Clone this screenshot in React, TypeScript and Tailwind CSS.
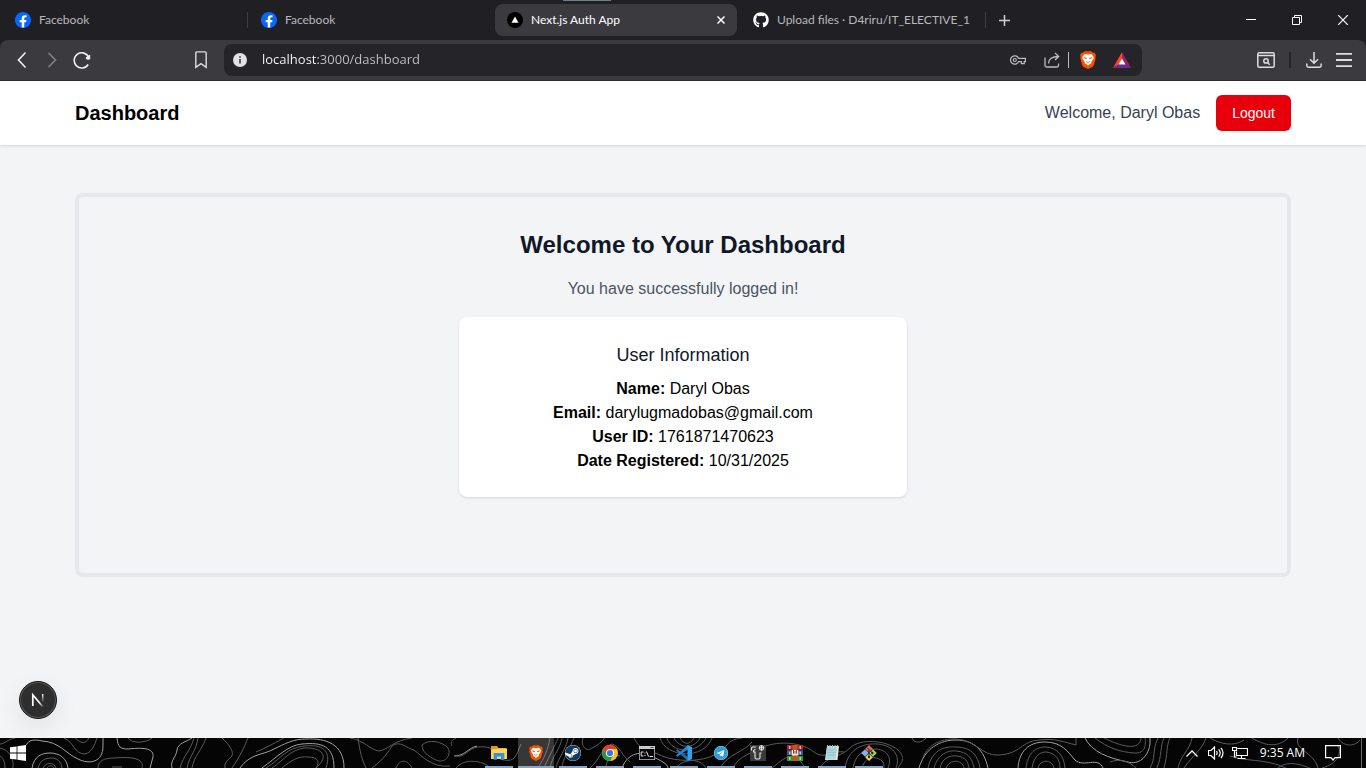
import React from "react";
import { FaGithub, FaSteam, FaTelegram } from "react-icons/fa";

function FacebookIcon() {
  return (
    <svg viewBox="0 0 24 24" className="size-4 shrink-0" aria-hidden="true">
      <circle cx="12" cy="12.5" r="11" fill="#fff" />
      <path
        fill="#0866ff"
        d="M24 12.073c0-6.627-5.373-12-12-12s-12 5.373-12 12c0 5.99 4.388 10.954 10.125 11.854v-8.385H7.078v-3.47h3.047V9.43c0-3.007 1.792-4.669 4.533-4.669 1.312 0 2.686.235 2.686.235v2.953H15.83c-1.491 0-1.956.925-1.956 1.874v2.25h3.328l-.532 3.47h-2.796v8.385C19.612 23.027 24 18.062 24 12.073z"
      />
    </svg>
  );
}

function NextIcon() {
  return (
    <svg viewBox="0 0 16 16" className="size-4 shrink-0" aria-hidden="true">
      <circle cx="8" cy="8" r="8" fill="#000" />
      <path d="M8 4.500 11.500 10.700H4.500Z" fill="#fff" />
    </svg>
  );
}

function BraveIcon({ className }: { className: string }) {
  return (
    <svg viewBox="0 0 16 18" className={className} aria-hidden="true">
      <path
        d="M4.600.2h6.800l1.500 1.600 1.700-.1 1.400 2.500-.6 1.500.4 1.200-2 7.200c-.2.7-.7 1.200-1.200 1.600L8.600 17.800c-.4.3-.8.3-1.200 0l-4-2.100c-.5-.4-1-.9-1.200-1.600L.2 6.900l.4-1.200L0 4.200 1.400 1.700 3.100 1.800Z"
        fill="#fb5000"
      />
      <path
        d="M4.600 3 8 3.500 11.400 3l2.200 2.700-.4 2.500-1.900 2.500.2 1.200L8 14.600l-3.500-2.700.2-1.200-1.900-2.500-.4-2.500Z"
        fill="#fff"
      />
      <path
        d="M3.800 5.900 6.900 7 6.300 8.100 4.400 7.600ZM12.200 5.900 9.100 7 9.700 8.100 11.600 7.600ZM6 9.900 8 11.200l2-1.300-.3 1L8 12.100l-1.700-1.200Z"
        fill="#fb5000"
      />
    </svg>
  );
}

function BatIcon() {
  return (
    <svg viewBox="0 0 18 16" className="h-4 w-[18px]" aria-hidden="true">
      <path d="M9 0 0 16l6-3.500L9 7Z" fill="#ff4724" />
      <path d="M9 0v7l3.300 5.500L18 16Z" fill="#9e1f63" />
      <path d="M0 16h18l-5.500-3.700h-7Z" fill="#662d91" />
      <path d="M9 6.500 5.500 12.500h7Z" fill="#fff" />
    </svg>
  );
}

const tabs = [
  { title: "Facebook", icon: <FacebookIcon />, active: false, divider: true },
  { title: "Facebook", icon: <FacebookIcon />, active: false, divider: false },
  { title: "Next.js Auth App", icon: <NextIcon />, active: true, divider: false },
  {
    title: "Upload files · D4riru/IT_ELECTIVE_1",
    icon: <FaGithub className="size-4 shrink-0 text-white" />,
    active: false,
    divider: true,
  },
];

function TabStrip() {
  return (
    <div className="relative flex h-10 items-center bg-[#201f24] pl-[3px]">
      <div className="absolute top-0 left-[563px] h-px w-12 bg-[#6b7d92]" />
      {tabs.map((tab, i) => (
        <React.Fragment key={i}>
          <div
            className={
              tab.active
                ? "flex h-8 w-[242px] min-w-0 items-center gap-2 rounded-lg bg-[#3b3a3f] pr-2 pl-3 text-white"
                : "flex h-8 w-[242px] min-w-0 items-center gap-2 rounded-lg pr-2 pl-3 text-[#b9b8bd]"
            }
          >
            {tab.icon}
            <span className="flex-1 truncate font-[Lato,sans-serif] text-xs">{tab.title}</span>
            {tab.active && (
              <button aria-label="Close tab" className="flex size-4 items-center justify-center">
                <svg viewBox="0 0 8 8" className="size-2" fill="none" stroke="#fff" strokeWidth="1.500">
                  <path d="M.5.5l7 7M7.500.5l-7 7" />
                </svg>
              </button>
            )}
          </div>
          <div className="flex h-4 w-1 shrink-0 justify-center">
            {tab.divider && <span className="w-px bg-[#3e3d43]" />}
          </div>
        </React.Fragment>
      ))}
      <button aria-label="New tab" className="flex h-8 w-[34px] items-center justify-center">
        <svg viewBox="0 0 11 11" className="size-[11px]" stroke="#cfced3" strokeWidth="1.500">
          <path d="M5.500 0v11M0 5.500h11" />
        </svg>
      </button>
      <div className="ml-auto flex h-10 shrink-0">
        <button aria-label="Minimize" className="flex w-[46px] items-center justify-center">
          <svg viewBox="0 0 10 10" className="size-2.5" stroke="#fff">
            <path d="M0 4.500h10" />
          </svg>
        </button>
        <button aria-label="Restore" className="flex w-[46px] items-center justify-center">
          <svg viewBox="0 0 10 10" className="size-2.5" fill="none" stroke="#fff">
            <path d="M.5 2.500h7v7h-7zM2.500 2.500v-2h7v7h-2" />
          </svg>
        </button>
        <button aria-label="Close" className="flex w-[46px] items-center justify-center">
          <svg viewBox="0 0 10 10" className="size-2.5" stroke="#fff" strokeWidth="1.200">
            <path d="M0 0l10 10M10 0 0 10" />
          </svg>
        </button>
      </div>
    </div>
  );
}

function BarButton({ label, children }: { label: string; children: React.ReactNode }) {
  return (
    <button aria-label={label} className="flex h-8 w-[30px] shrink-0 items-center justify-center">
      {children}
    </button>
  );
}

function Toolbar() {
  return (
    <div className="bg-[#201f24]">
      <div className="flex h-[41px] items-center rounded-t-lg border-b border-[#2c2b30] bg-[#3b3a3f] px-[7px]">
        <BarButton label="Back">
          <svg viewBox="0 0 18 18" className="size-[18px]" fill="none" stroke="#f0f0f2" strokeWidth="1.600">
            <path d="M12.500 1.500 5.500 9l7 7.500" />
          </svg>
        </BarButton>
        <BarButton label="Forward">
          <svg viewBox="0 0 18 18" className="size-[18px]" fill="none" stroke="#828187" strokeWidth="1.600">
            <path d="M5.500 2 12.500 9l-7 7" />
          </svg>
        </BarButton>
        <BarButton label="Reload">
          <svg viewBox="0 0 18 18" className="size-[18px]" fill="none" stroke="#f0f0f2" strokeWidth="1.600">
            <path d="M15.200 13.500A7.600 7.600 0 1 1 15.800 6.500" />
            <path d="M17.200 3.500v4.500q-1 1-2.500.8-2-.5-2-2.300 1-1 4.500-3Z" fill="#f0f0f2" stroke="none" />
          </svg>
        </BarButton>
        <div className="w-[89px] shrink-0" />
        <BarButton label="Bookmark">
          <svg viewBox="0 0 12 18" className="h-[18px] w-3" fill="none" stroke="#dddce1" strokeWidth="1.400">
            <path d="M.8 1.900Q.8.900 1.800.9h8.400q1 0 1 1v14.400L6 12.700.8 16.300Z" />
          </svg>
        </BarButton>
        <div className="ml-2 flex h-8 min-w-0 flex-1 items-center rounded-lg bg-[#252429] pr-[5px] pl-[9px]">
          <svg viewBox="0 0 14 14" className="size-3.5 shrink-0" aria-hidden="true">
            <circle cx="7" cy="7" r="7" fill="#e2e1e6" />
            <path d="M6.200 6h1.600v4.500H6.200zM6.200 3.200h1.600v1.600H6.200z" fill="#3b3a3f" />
          </svg>
          <input
            aria-label="Address"
            defaultValue="localhost:3000/dashboard"
            className="ml-[15px] min-w-0 flex-1 bg-[linear-gradient(90deg,#ffffff_56px,#c4c3c8_56px)] bg-clip-text text-[13px] text-transparent caret-white outline-none"
          />
          <BarButton label="Passwords">
            <svg viewBox="0 0 16 10" className="h-2.5 w-4" fill="none" stroke="#bcbbc0" strokeWidth="1.200">
              <path d="M8.600 3.400H15.400V6.600H14.200V8.600H11.400V6.600H8.600A4.200 4.200 0 1 1 8.600 3.400Z" />
              <circle cx="4.800" cy="5" r="1.500" />
            </svg>
          </BarButton>
          <div className="ml-1">
            <BarButton label="Share">
              <svg viewBox="0 0 16 16" className="size-4" fill="none" stroke="#bcbbc0" strokeWidth="1.300">
                <path d="M1 5.500v8q0 1.500 1.500 1.500h10.500q1.500 0 1.500-1.500v-2M4.500 11.500C4.500 7 8 4.500 14.500 4.500M11 1l3.700 3.500L11 8" />
              </svg>
            </BarButton>
          </div>
          <div className="mr-1 ml-px h-4 w-px bg-[#bcbbc0]" />
          <BarButton label="Brave Shields">
            <BraveIcon className="h-[18px] w-4" />
          </BarButton>
          <div className="ml-1">
            <BarButton label="Brave Rewards">
              <BatIcon />
            </BarButton>
          </div>
        </div>
        <div className="w-[109px] shrink-0" />
        <BarButton label="Search tabs">
          <svg viewBox="0 0 18 16" className="h-4 w-[18px]" fill="none" stroke="#dddce1" strokeWidth="1.500">
            <rect x=".8" y=".8" width="16.400" height="14.400" rx="1.500" />
            <path d="M1 3.400h16M10.700 10.700l2 2" />
            <circle cx="9" cy="8.900" r="2.200" />
          </svg>
        </BarButton>
        <div className="mx-2 h-4 w-0.5 bg-[#252429]" />
        <BarButton label="Downloads">
          <svg viewBox="0 0 16 16" className="size-4" fill="none" stroke="#dddce1" strokeWidth="1.500">
            <path d="M8 0v11M4 7.200l4 4 4-4M.8 11.500v2q0 1.700 1.700 1.700h11q1.700 0 1.700-1.700v-2" />
          </svg>
        </BarButton>
        <BarButton label="Menu">
          <svg viewBox="0 0 16 14" className="h-3.5 w-4" stroke="#dddce1" strokeWidth="1.800">
            <path d="M0 .9h16M0 7h16M0 13.100h16" />
          </svg>
        </BarButton>
      </div>
    </div>
  );
}

const details = [
  ["Name:", "Daryl Obas"],
  ["Email:", "darylugmadobas@gmail.com"],
  ["User ID:", "1761871470623"],
  ["Date Registered:", "10/31/2025"],
];

function DashboardPage() {
  return (
    <div className="relative flex-1 bg-gray-100 font-['Liberation_Sans',Arial,sans-serif] text-black">
      <nav className="bg-white shadow">
        <div className="mx-auto flex h-16 max-w-7xl items-center justify-between px-8">
          <h1 className="text-xl font-bold">Dashboard</h1>
          <div className="flex items-center gap-4">
            <span className="text-gray-700">Welcome, Daryl Obas</span>
            <button className="rounded-md bg-[#e7000b] px-4 py-2 text-sm font-medium text-white">Logout</button>
          </div>
        </div>
      </nav>
      <main className="mx-auto max-w-7xl px-8 py-12">
        <div className="min-h-96 rounded-lg border-4 border-gray-200 p-8 text-center">
          <h2 className="mb-4 text-2xl font-bold text-gray-900">Welcome to Your Dashboard</h2>
          <p className="mb-4 text-gray-600">You have successfully logged in!</p>
          <div className="mx-auto max-w-md rounded-lg bg-white p-6 shadow">
            <h3 className="mb-2 text-lg font-medium text-gray-900">User Information</h3>
            {details.map(([label, value]) => (
              <p key={label}>
                <strong>{label}</strong> {value}
              </p>
            ))}
          </div>
        </div>
      </main>
      <button
        aria-label="Open Next.js Dev Tools"
        className="absolute bottom-[19px] left-[19px] flex size-[38px] items-center justify-center rounded-full border border-[#171717] bg-[#2e2e2e] shadow-[inset_0_0_0_1px_#5a5a5a,0_8px_24px_rgba(0,0,0,0.08)]"
      >
        <svg viewBox="0 0 14 14" className="size-3.5" fill="none" strokeWidth="1.700">
          <defs>
            <linearGradient id="next-diagonal" x1="6" y1="6" x2="12" y2="14" gradientUnits="userSpaceOnUse">
              <stop offset=".4" stopColor="#fff" />
              <stop offset="1" stopColor="#fff" stopOpacity=".1" />
            </linearGradient>
            <linearGradient id="next-stem" x1="0" y1="1" x2="0" y2="9" gradientUnits="userSpaceOnUse">
              <stop stopColor="#fff" />
              <stop offset="1" stopColor="#fff" stopOpacity=".1" />
            </linearGradient>
          </defs>
          <path d="M1.800 13V1.800L12 14" stroke="url(#next-diagonal)" />
          <path d="M11 1h1.400v8H11z" fill="url(#next-stem)" />
        </svg>
      </button>
    </div>
  );
}

const brightContours = [
  "M26 7C29 2 34 1 42 3C60 4 66 16 78 21C90 27 103 24 103 8V0",
  "M117 0C118 9 120 11 128 11C146 9 154 11 153 19L150 30",
  "M32 30C34 18 42 15 50 15C60 15 67 21 68 30",
  "M172 30C170 22 176 20 177 12C178 5 186 4 192 0",
  "M240 30C250 16 262 17 272 12C286 5 294 1 306 1C326 0 344 6 344 30",
  "M262 30C276 20 288 7 302 6C322 4 334 8 334 30",
  "M454 18C465 18 468 10 477 8",
  "M622 30C628 14 642 13 651 18C660 22 668 26 668 30",
  "M919 30C925 10 940 2 956 2C974 2 984 12 988 30",
  "M1018 30C1019 14 1028 4 1045 4C1062 4 1068 14 1075 22C1084 30 1098 18 1103 30",
  "M1085 0C1092 14 1108 20 1128 24C1138 27 1148 20 1150 6V0",
];

const dimContours = [
  "M0 6C5 6 8 1 15 0M0 10C8 12 14 18 13 30M0 18C4 20 5 26 5 30",
  "M64 0C74 4 74 16 85 16C92 14 94 8 97 0M75 0C80 4 84 8 89 0",
  "M38 30C40 22 46 20 51 20C57 20 61 23 62 30M43 30C46 24 54 24 56 30M47 30C49 27 52 27 54 30",
  "M128 0C132 6 146 5 152 0M98 30C98 23 104 20 114 20C136 18 144 22 142 30M112 29H122",
  "M180 30C184 16 190 14 194 0M187 30C190 16 196 14 198 0M192 30C194 18 202 12 206 0",
  "M222 0C228 6 234 12 232 18C228 22 224 24 225 30M248 0C244 10 240 18 232 30",
  "M266 30C282 20 286 10 304 8C322 6 332 12 326 30M272 30C284 22 290 12 304 10C322 9 330 18 316 30M282 30C292 22 298 18 308 19C318 19 320 24 316 30",
  "M256 14C270 8 276 4 284 0M358 0C360 14 362 22 366 30",
  "M350 0C364 2 370 12 379 13C388 12 394 2 412 0M372 30C380 24 386 18 392 8C400 2 406 10 414 12C422 18 432 30 450 28M396 30C400 20 408 22 412 30",
  "M422 7C428 1 442 3 448 10C452 18 444 26 436 22C428 18 422 14 422 7M452 8C450 4 452 2 456 0",
  "M456 18C465 20 468 10 478 9C500 7 490 20 504 22C515 24 516 18 521 6M456 30C464 20 482 22 491 30",
  "M538 30C544 20 548 12 550 0M544 30C550 16 554 10 558 0M550 30C552 18 560 12 562 0M556 30C558 20 566 12 568 0M562 30C562 22 570 10 574 0",
  "M583 0C580 10 588 14 592 10C600 6 604 2 604 0M590 30C600 22 602 8 612 6C620 8 622 18 630 24M606 30C606 22 612 16 620 18",
  "M660 0C666 20 704 22 712 0M667 0C672 16 698 16 706 0M674 0C680 11 694 11 700 0M680 0C684 7 690 7 694 0",
  "M634 0C640 14 652 12 662 18C676 24 702 24 714 17C730 10 724 2 742 0M676 30C684 20 700 20 706 30",
  "M733 30C738 18 754 14 766 8C784 2 804 6 814 14C824 22 834 12 844 14M720 30C728 16 744 14 752 4",
  "M772 30C780 24 786 16 796 20C804 24 802 30 808 30M820 30C826 18 840 20 850 10C860 0 886 2 898 12C906 20 902 24 898 30",
  "M853 30C855 18 862 11 876 11C888 12 892 20 888 30M862 30C864 22 870 18 876 20C884 22 884 26 884 30M845 30C848 10 864 5 878 6C896 8 900 20 896 30",
  "M912 0C914 6 922 5 926 0M922 22C926 8 940 0 956 1C976 2 982 18 998 17C1022 16 1020 3 1040 2C1054 0 1064 4 1076 7V0",
  "M928 30C932 12 944 8 956 9C972 9 978 18 980 30M934 30C938 16 948 12 956 13C968 14 972 20 974 30M940 30C942 20 950 17 957 18C966 19 968 24 969 30M946 30C950 21 962 21 964 30",
  "M1026 30C1028 14 1036 9 1046 9C1058 10 1064 18 1065 30M1032 30C1034 18 1040 14 1046 14C1056 15 1060 22 1060 30M1038 30C1040 21 1052 21 1054 30",
  "M1095 0C1108 10 1120 14 1134 15C1146 16 1146 6 1145 0M1104 0C1120 8 1140 14 1141 0M1110 24C1120 20 1130 24 1136 30",
  "M1150 30C1156 20 1152 12 1158 0M1157 30C1162 18 1160 8 1164 0M1164 30C1168 16 1166 8 1170 0M1178 30C1180 18 1190 12 1192 0M1184 30C1192 18 1202 12 1206 0",
  "M1210 0C1220 6 1234 9 1244 2M1252 0C1268 10 1280 8 1288 0M1230 18C1246 24 1264 20 1286 30M1278 30C1290 20 1308 30 1310 30",
  "M1298 0C1294 12 1314 14 1318 30M1338 0C1344 10 1356 8 1360 2M1322 30C1338 26 1342 14 1338 8",
];

function CmdIcon() {
  return (
    <svg viewBox="0 0 16 14" className="h-3.5 w-4">
      <path d="M0 0h16v14H0z" fill="#c8ccd0" />
      <path d="M.7 3h14.600v10.300H.7z" fill="#050505" />
      <path d="M4.500 6H2.200v4h2.300M6 6.500v1M6 9v1M7.500 5.500l2 5M10.500 10.500H14" fill="none" stroke="#fff" strokeWidth=".9" />
      <path d="M11.500 1.500h3" stroke="#555" />
    </svg>
  );
}

const apps = [
  {
    name: "File Explorer",
    icon: (
      <svg viewBox="0 0 16 14" className="h-3.5 w-4">
        <path d="M0 0h6l1.500 2H15v4H0z" fill="#dc9b0c" />
        <path d="M0 3.500 7 2.500h9V13H0z" fill="#ffd35a" />
        <path d="M2.700 13.700V7h10.600v6.700H10V10.500H6v3.200z" fill="#3093e6" />
      </svg>
    ),
  },
  { name: "Brave", active: true, icon: <BraveIcon className="h-4 w-3.5" /> },
  {
    name: "Steam",
    icon: (
      <span className="flex size-4 items-center justify-center rounded-full bg-white">
        <FaSteam className="size-4 text-[#123962]" />
      </span>
    ),
  },
  {
    name: "Chrome",
    icon: (
      <svg viewBox="0 0 16 16" className="size-4">
        <circle cx="8" cy="8" r="8" fill="#fbc116" />
        <path d="M1.070 4A8 8 0 0 1 14.930 4L8 4.300 4.540 10Z" fill="#e33b2e" />
        <path d="M1.070 4A8 8 0 0 0 8 16L11.460 10 8 11.800 4.540 10Z" fill="#229a48" />
        <circle cx="8" cy="8" r="4" fill="#fff" />
        <circle cx="8" cy="8" r="3.100" fill="#3478e5" />
      </svg>
    ),
  },
  { name: "Command Prompt", icon: <CmdIcon /> },
  {
    name: "Visual Studio Code",
    icon: (
      <svg viewBox="0 0 16 16" className="size-4">
        <path d="M0 5.500 1.400 4.200 12 12v4Z" fill="#1173bb" />
        <path d="M0 10.500 1.400 11.800 12 4V0Z" fill="#1b8bd6" />
        <path d="M11.500 0 16 2v12l-4.500 2Z" fill="#2fa4ee" />
      </svg>
    ),
  },
  {
    name: "Telegram",
    icon: (
      <span className="flex size-3.5 items-center justify-center rounded-full bg-white">
        <FaTelegram className="size-3.5 shrink-0 text-[#2a9fda]" />
      </span>
    ),
  },
  {
    name: "Utility",
    icon: (
      <svg viewBox="0 0 16 16" className="size-4">
        <path d="M0 0h16v16H0z" fill="#3a3a3a" />
        <path
          d="M1.500 5.500V3.500Q1.500 2 3 2H6M5.500 4.500Q3.500 4.500 3.500 6.500V7H5v5.500Q5 14 6.500 14H8.500Q10 14 10 12.500V8H11.500M9 2.800h5M11.500.500v5"
          fill="none"
          stroke="#e8e8e8"
          strokeWidth="1.100"
        />
        <circle cx="11.500" cy="2.900" r="2.300" fill="none" stroke="#e8e8e8" />
      </svg>
    ),
  },
  {
    name: "WinRAR",
    icon: (
      <svg viewBox="0 0 16 16" className="size-4">
        <path d="M0 0h16v4.700H0z" fill="#b3204d" />
        <path d="M0 5.300h16v5H0z" fill="#3a55c0" />
        <path d="M0 11h16v5H0z" fill="#2c9a3e" />
        <path d="M2 1h1.500v3H2zM12.500 1H14v3h-1.500zM2 6.500h1.500v3H2zM12.500 6.500H14v3h-1.500zM2 12h1.500v3H2zM12.500 12H14v3h-1.500z" fill="#e8c840" />
        <path d="M5.500 0h5v16h-5z" fill="#c8541c" />
        <path d="M4.700 5h6.600v5.500H4.700z" fill="#f3ecd8" />
        <path d="M6.500 5v3.700M8 6v2.700M9.500 5v3.700" fill="none" stroke="#b03a18" />
      </svg>
    ),
  },
  {
    name: "Notepad",
    icon: (
      <svg viewBox="0 0 16 16" className="size-4">
        <path d="M3 1h12l-1.500 14H1Z" fill="#f0e8c8" />
        <path d="M3 2h10l-1.500 12.500H1.500Z" fill="#a9d8e2" />
        <path d="M3.500 5h9M3.200 7.500h9M3 10h9" stroke="#8dc1cc" strokeWidth=".8" />
        <path d="M3.500 0v2M6 0v2M8.500 0v2M11 0v2M13.500 0v2" stroke="#b8b8b8" />
      </svg>
    ),
  },
  {
    name: "Git Bash",
    icon: (
      <svg viewBox="0 0 16 16" className="size-4">
        <path d="M8 0l3.800 3.800L8 7.600 4.200 3.800Z" fill="#f0605a" />
        <path d="M4 4.200 7.800 8 4 11.800.200 8Z" fill="#7db4f5" />
        <path d="M12 4.200 15.800 8 12 11.800 8.200 8Z" fill="#9cd65c" />
        <path d="M8 8.400l3.800 3.800L8 16l-3.800-3.800Z" fill="#f6d75c" />
        <path d="M6 2.500l5 5M8 5v7" stroke="#222" strokeWidth="1" />
        <circle cx="8" cy="12" r="1.200" fill="#222" />
        <circle cx="11.300" cy="8" r="1.200" fill="#222" />
      </svg>
    ),
  },
];

function Taskbar() {
  return (
    <footer className="relative h-[30px] overflow-hidden bg-[#050505] text-white">
      <svg
        viewBox="0 0 1366 30"
        preserveAspectRatio="xMidYMid slice"
        className="absolute inset-0 size-full"
        fill="none"
        aria-hidden="true"
      >
        <g stroke="#a0a0a0" strokeWidth="1">
          {brightContours.map((d) => (
            <path key={d} d={d} />
          ))}
        </g>
        <g stroke="#5a5a5a" strokeWidth="1">
          {dimContours.map((d) => (
            <path key={d} d={d} />
          ))}
        </g>
      </svg>
      <div className="relative grid h-full grid-cols-[1fr_auto_1fr]">
        <div className="flex">
          <button aria-label="Start" className="flex w-9 items-center justify-center">
            <svg viewBox="0 0 16 16" className="size-4" fill="#fff">
              <path d="M0 2.300 6.600 1.400v6.200H0zM7.400 1.300 16 0v7.600H7.400zM0 8.400h6.600v6.200L0 13.700zM7.400 8.400H16V16l-8.600-1.300z" />
            </svg>
          </button>
        </div>
        <div className="flex gap-px pl-0.5">
          {apps.map((app) => (
            <button
              key={app.name}
              aria-label={app.name}
              className={
                app.active
                  ? "flex w-9 flex-col items-center bg-white/20"
                  : "flex w-9 flex-col items-center"
              }
            >
              <span className="flex flex-1 items-center pt-0.5">{app.icon}</span>
              <span className={app.active ? "h-0.5 w-full bg-[#8aa3c4]" : "h-0.5 w-7 bg-[#8aa3c4]"} />
            </button>
          ))}
        </div>
        <div className="flex items-center justify-end">
          <button aria-label="Show hidden icons" className="flex w-6 justify-center">
            <svg viewBox="0 0 12 7" className="h-[7px] w-3" fill="none" stroke="#fff" strokeWidth="1.300">
              <path d="M.5 6.500 6 1l5.500 5.500" />
            </svg>
          </button>
          <button aria-label="Volume" className="flex w-6 justify-center">
            <svg viewBox="0 0 16 14" className="h-3.5 w-4" fill="none" stroke="#fff" strokeWidth="1.200">
              <path d="M.5 4.500v5H3l3.500 3.500V1L3 4.500ZM8.500 5q1.300 2 0 4M10.700 3.300q3 3.700 0 7.400M13 1.800q4 5.200 0 10.400" />
            </svg>
          </button>
          <button aria-label="Network" className="flex w-6 justify-center">
            <svg viewBox="0 0 16 14" className="h-3.5 w-4" fill="none" stroke="#fff" strokeWidth="1.200">
              <path d="M5.500 2.500h10v7h-11v-4M9.500 9.500v3M5.500 12.500h8M.5 1.500h4v3h-4zM2.500 4.500v6.500h2" />
            </svg>
          </button>
          <time className="ml-2 text-xs">9:35 AM</time>
          <button aria-label="Notifications" className="mr-5 ml-5 flex w-4 justify-center">
            <svg viewBox="0 0 16 16" className="size-4" fill="none" stroke="#fff" strokeWidth="1.200">
              <path d="M.6.6h14.800v12H10L8 15l-2-2.400H.6z" />
            </svg>
          </button>
          <span className="mr-1 h-[30px] w-px bg-[#6a6a6a]" />
        </div>
      </div>
    </footer>
  );
}

export default function App() {
  return (
    <div className="flex min-h-screen flex-col font-['Open_Sans','Noto_Sans',sans-serif]">
      <TabStrip />
      <Toolbar />
      <DashboardPage />
      <Taskbar />
    </div>
  );
}
